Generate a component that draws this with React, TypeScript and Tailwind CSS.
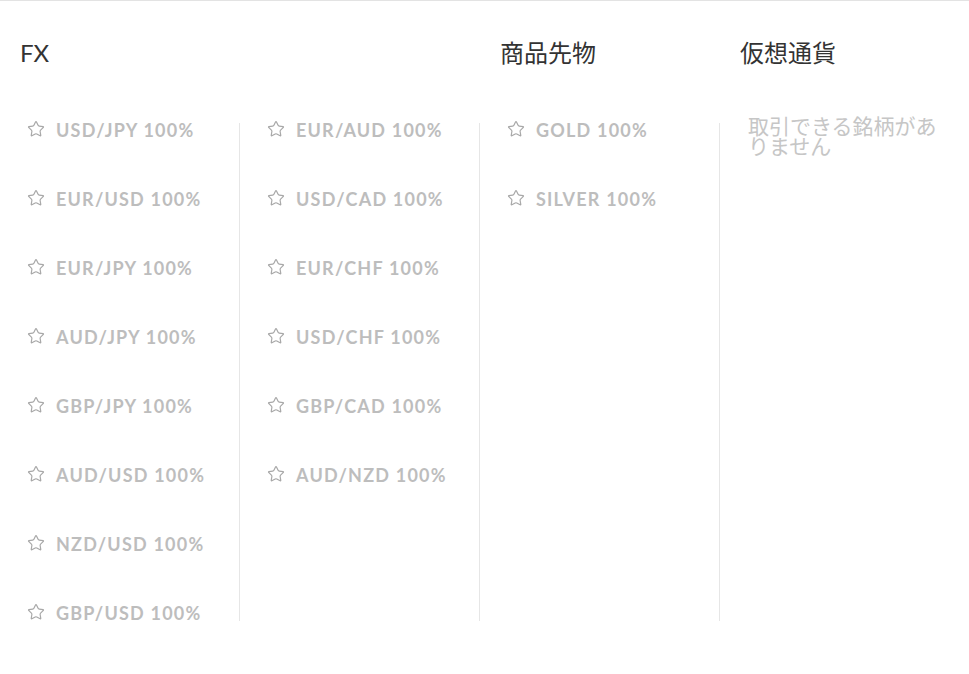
import { Star } from 'lucide-react';

const fxLeft = ['USD/JPY', 'EUR/USD', 'EUR/JPY', 'AUD/JPY', 'GBP/JPY', 'AUD/USD', 'NZD/USD', 'GBP/USD'];
const fxRight = ['EUR/AUD', 'USD/CAD', 'EUR/CHF', 'USD/CHF', 'GBP/CAD', 'AUD/NZD'];
const commodities = ['GOLD', 'SILVER'];

function SymbolList({ symbols }: { symbols: string[] }) {
  return (
    <ul className="flex-1 flex flex-col">
      {symbols.map((s) => (
        <li key={s} className="h-[69px] flex items-center gap-[11px] pl-[27px]">
          <Star className="w-[18px] h-[18px] -mt-[3px] text-[#a8a8a8]" strokeWidth={1.6} />
          <span className="text-[18px] font-bold text-[#bdbdbd] tracking-[1.2px]">{s} 100%</span>
        </li>
      ))}
    </ul>
  );
}

export default function App() {
  return (
    <div
      className="min-h-[674px] bg-white border-t border-[#e3e3e3]"
      style={{ fontFamily: 'Lato, "Noto Sans CJK JP", sans-serif' }}
    >
      <div className="grid grid-cols-[480px_240px_240px] h-[95px]">
        <h2 className="pl-5 pt-[37px] text-[24px] leading-[30px] text-[#333]">FX</h2>
        <h2 className="pl-5 pt-[37px] text-[24px] leading-[30px] text-[#333]">商品先物</h2>
        <h2 className="pl-5 pt-[37px] text-[24px] leading-[30px] text-[#333]">仮想通貨</h2>
      </div>

      <div className="grid grid-cols-[240px_240px_240px_240px]">
        <div className="flex">
          <SymbolList symbols={fxLeft} />
          <div className="w-px my-[27px] bg-[#e6e6e6]"></div>
        </div>
        <div className="flex">
          <SymbolList symbols={fxRight} />
          <div className="w-px my-[27px] bg-[#e6e6e6]"></div>
        </div>
        <div className="flex">
          <SymbolList symbols={commodities} />
          <div className="w-px my-[27px] bg-[#e6e6e6]"></div>
        </div>
        <div className="pl-[28px] pt-[20px]">
          <p className="w-[200px] text-[21px] leading-[20px] text-[#c6c6c6]">取引できる銘柄がありません</p>
        </div>
      </div>
    </div>
  );
}
